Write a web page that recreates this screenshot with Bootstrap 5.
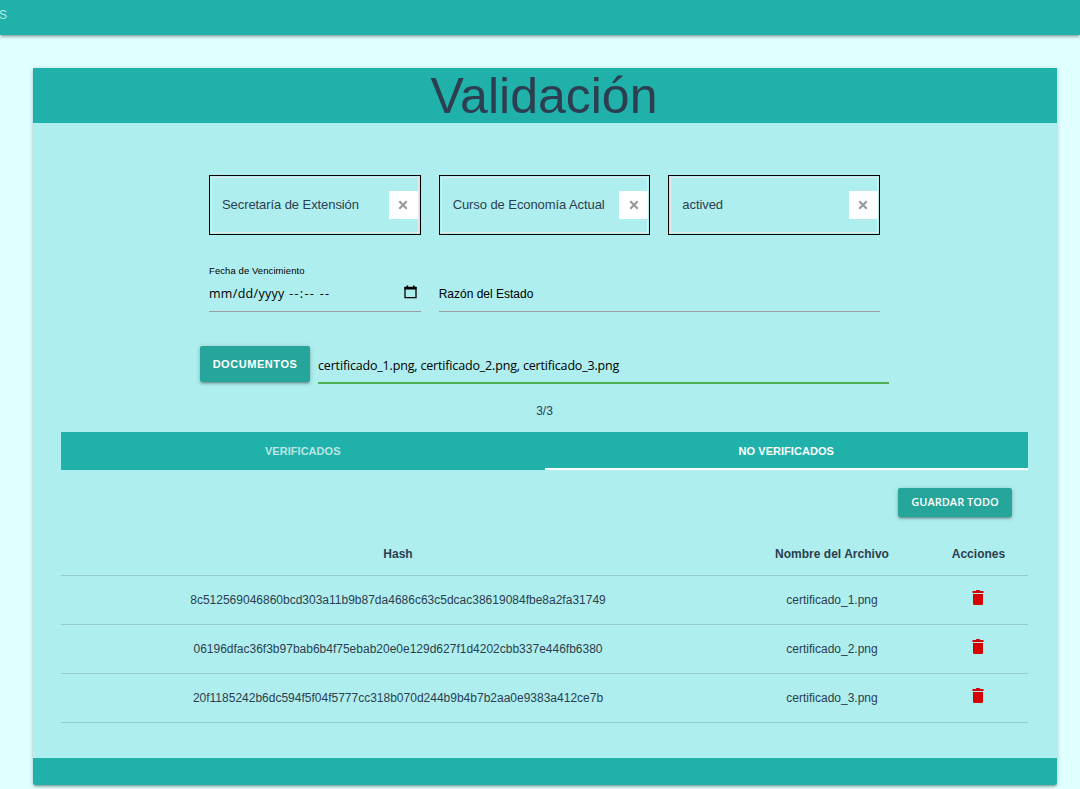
<!DOCTYPE html>
<html lang="es">
<head>
<meta charset="utf-8">
<meta name="viewport" content="width=device-width, initial-scale=1">
<title>Validación</title>
<link href="https://cdn.jsdelivr.net/npm/bootstrap@5.3.0/dist/css/bootstrap.min.css" rel="stylesheet">
<style>
  body { background: #e0ffff; color: #2c3e50; font-family: "Liberation Sans", Arial, sans-serif; font-size: 12px; line-height: 18px; height: 789px; overflow: hidden; }
  .depth { box-shadow: 0 2px 2px 0 rgba(0,0,0,.14), 0 3px 1px -2px rgba(0,0,0,.12), 0 1px 5px 0 rgba(0,0,0,.2); }
  .teal { background: #20b2aa; }
  .topbar { height: 35px; color: rgba(255,255,255,.7); font-size: 12px; line-height: 31px; }
  .topbar span { margin-left: -1px; }
  .panel { margin: 33px 23px 0 33px; background: #afeeee; border-radius: 0 0 2px 2px; overflow: hidden; }
  .panel-title { height: 55px; font-size: 50px; line-height: 57px; font-weight: 400; padding-right: 2px; }
  .panel-content { height: 635px; padding: 52px 29px 0 28px; }
  .panel-foot { height: 27px; }
  .form-area { width: 689px; }
  .form-area .row { --bs-gutter-x: 18px; margin: 0; }
  .picker { height: 60px; border: 1px solid #000; padding: 1px; }
  .picker-in { height: 56px; border: 1px solid #e8e8e8; padding-left: 10px; font-size: 13px; letter-spacing: -.08px; }
  .col-4 + .col-4 .picker-in { padding-left: 11px; }
  .col-4 + .col-4 .clear-btn { margin-right: -1px; }
  .clear-btn { width: 29px; height: 28px; background: #fff; border: 0; padding: 0; }
  .lined { height: 50px; border-bottom: 1px solid #9e9e9e; color: #000; }
  .reason { padding-top: 23px; }
  .tiny { font-size: 9.5px; line-height: 12px; padding-top: 3px; height: 20px; letter-spacing: .08px; }
  .segoe { font-family: "Open Sans", "Noto Sans", sans-serif; font-size: 12.5px; color: #000; }
  .date-line { padding-top: 3px; letter-spacing: .3px; }
  .date-line svg { margin-top: -4px; }
  .dashes { letter-spacing: 1.3px; margin-left: 1px; }
  .btn-teal, .btn-teal:hover { background: #26a69a; color: #fff; border: 0; border-radius: 2px; padding: 0; letter-spacing: .5px; }
  .btn-docs { width: 110px; height: 36px; font-weight: 700; font-size: 11px; letter-spacing: .55px; }
  .files { height: 38px; border-bottom: 2px solid #4caf50; line-height: 39px; letter-spacing: -.17px; }
  .btn-all { width: 114px; height: 29px; margin: 18px 16px 14px 0; font-family: "Open Sans", sans-serif; font-size: 11px; font-weight: 600; letter-spacing: 0; }
  .tab-bar { height: 38px; font-size: 11px; font-weight: 700; line-height: 38px; margin-top: 12px; letter-spacing: .04px; }
  .tab-bar .nav-link { color: rgba(255,255,255,.7); padding: 0; height: 38px; border-radius: 0; }
  .tab-bar .nav-link.active { color: #fff; border-bottom: 2px solid #fff; }
  .hashes { table-layout: fixed; margin: 0; --bs-table-bg: transparent; --bs-table-color: #2c3e50; }
  .hashes th, .hashes td { height: 49px; padding: 0 0 0 1px; vertical-align: middle; border-bottom: 1px solid rgba(0,0,0,.14); }
  .hashes th { height: 44px; padding-top: 3px; letter-spacing: .02px; }
  .hashes td:last-child, .hashes th:last-child { padding-left: 0; }
  .hashes svg { display: block; margin: -4px auto 0; position: relative; left: -1px; }
</style>
</head>
<body>
<nav class="topbar teal depth"><span>S</span></nav>
<main class="panel depth">
  <h1 class="panel-title teal text-center mb-0">Validación</h1>
  <div class="panel-content">
    <div class="form-area mx-auto">
      <div class="row">
        <div class="col-4"><div class="picker"><div class="picker-in d-flex align-items-center justify-content-between"><span>Secretaría de Extensión</span><button class="clear-btn" aria-label="Quitar"><svg width="10" height="10" viewBox="0 0 10 10" class="d-block mx-auto"><path d="M1.3 1.3l7.4 7.4M8.7 1.3l-7.4 7.4" stroke="#999" stroke-width="2.2"/></svg></button></div></div></div>
        <div class="col-4"><div class="picker"><div class="picker-in d-flex align-items-center justify-content-between"><span>Curso de Economía Actual</span><button class="clear-btn" aria-label="Quitar"><svg width="10" height="10" viewBox="0 0 10 10" class="d-block mx-auto"><path d="M1.3 1.3l7.4 7.4M8.7 1.3l-7.4 7.4" stroke="#999" stroke-width="2.2"/></svg></button></div></div></div>
        <div class="col-4"><div class="picker"><div class="picker-in d-flex align-items-center justify-content-between"><span>actived</span><button class="clear-btn" aria-label="Quitar"><svg width="10" height="10" viewBox="0 0 10 10" class="d-block mx-auto"><path d="M1.3 1.3l7.4 7.4M8.7 1.3l-7.4 7.4" stroke="#999" stroke-width="2.2"/></svg></button></div></div></div>
      </div>
      <div class="row" style="padding-top:27px">
        <div class="col-4"><div class="lined"><div class="tiny">Fecha de Vencimiento</div>
          <div class="d-flex justify-content-between align-items-center segoe date-line"><span>mm/dd/yyyy <span class="dashes">--:-- --</span></span>
          <svg width="13" height="14" viewBox="0 0 13 14" class="me-1"><path d="M1 2.5h11v10.2H1z" fill="none" stroke="#000" stroke-width="1.3"/><path d="M.5 2h12v2.5H.5zM2.5.5h1.6V3H2.5zM9 .5h1.6V3H9z"/></svg></div></div></div>
        <div class="col-8"><div class="lined reason">Razón del Estado</div></div>
      </div>
      <div class="d-flex gap-2" style="padding-top:34px">
        <button class="btn btn-teal btn-docs depth">DOCUMENTOS</button>
        <div class="files segoe flex-grow-1">certificado_1.png, certificado_2.png, certificado_3.png</div>
      </div>
    </div>
    <div class="text-center" style="padding-top:18px">3/3</div>
    <div class="nav nav-fill tab-bar teal">
      <a class="nav-link col-6">VERIFICADOS</a><a class="nav-link col-6 active">NO VERIFICADOS</a>
    </div>
    <div class="d-flex justify-content-end"><button class="btn btn-teal btn-all depth">GUARDAR TODO</button></div>
    <table class="table hashes text-center">
      <colgroup><col style="width:673px"><col style="width:195px"><col style="width:99px"></colgroup>
      <thead><tr><th>Hash</th><th>Nombre del Archivo</th><th>Acciones</th></tr></thead>
      <tbody>
        <tr><td>8c512569046860bcd303a11b9b87da4686c63c5dcac38619084fbe8a2fa31749</td><td>certificado_1.png</td><td><svg width="12" height="16" viewBox="0 0 12 16"><path fill="#d50000" d="M.5 1H3.7L4.5 0h3l.8 1h3.2V3H.5zM1 4h10v9.500a1.5 1.5 0 0 1-1.5 1.5h-7A1.5 1.5 0 0 1 1 13.500z"/></svg></td></tr>
        <tr><td>06196dfac36f3b97bab6b4f75ebab20e0e129d627f1d4202cbb337e446fb6380</td><td>certificado_2.png</td><td><svg width="12" height="16" viewBox="0 0 12 16"><path fill="#d50000" d="M.5 1H3.7L4.5 0h3l.8 1h3.2V3H.5zM1 4h10v9.500a1.5 1.5 0 0 1-1.5 1.5h-7A1.5 1.5 0 0 1 1 13.500z"/></svg></td></tr>
        <tr><td>20f1185242b6dc594f5f04f5777cc318b070d244b9b4b7b2aa0e9383a412ce7b</td><td>certificado_3.png</td><td><svg width="12" height="16" viewBox="0 0 12 16"><path fill="#d50000" d="M.5 1H3.7L4.5 0h3l.8 1h3.2V3H.5zM1 4h10v9.500a1.5 1.5 0 0 1-1.5 1.5h-7A1.5 1.5 0 0 1 1 13.500z"/></svg></td></tr>
      </tbody>
    </table>
  </div>
  <div class="panel-foot teal"></div>
</main>
<script src="https://cdn.jsdelivr.net/npm/bootstrap@5.3.0/dist/js/bootstrap.bundle.min.js"></script>
</body>
</html>
